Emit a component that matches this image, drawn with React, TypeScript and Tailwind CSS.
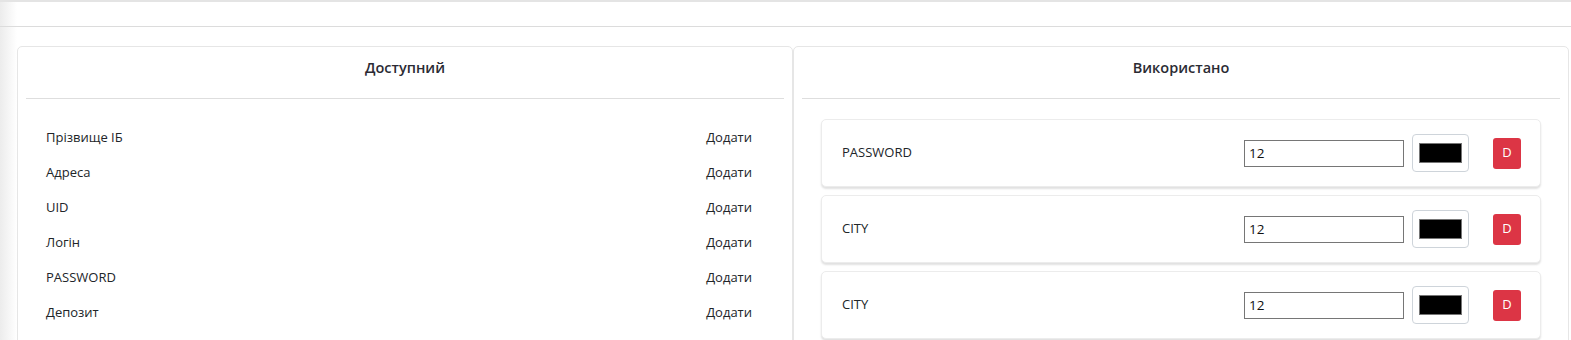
const available = ["Прізвище ІБ", "Адреса", "UID", "Логін", "PASSWORD", "Депозит"];

const used = [
  { id: 1, name: "PASSWORD", size: "12" },
  { id: 2, name: "CITY", size: "12" },
  { id: 3, name: "CITY", size: "12" },
];

const UsedRow = ({ name, size }: { name: string; size: string }) => (
  <div className="flex h-[68px] items-center rounded-[5px] border border-[#ececec] bg-white pl-[20px] pr-[19px] shadow-[0_2px_2px_rgba(0,0,0,0.12)]">
    <span className="flex-1 text-[13px] text-[#212529]">{name}</span>
    <input
      readOnly
      value={size}
      className="h-[27px] w-[160px] border border-[#767676] px-[4px] text-[13.5px] text-[#111] outline-none"
    />
    <div className="ml-[8px] flex h-[38px] w-[57px] items-center justify-center rounded-[4px] border border-[#ced4da] bg-white">
      <div className="h-[20px] w-[43px] border border-[#767676] bg-black" />
    </div>
    <button className="ml-[24px] flex h-[31px] w-[28px] items-center justify-center rounded-[3px] bg-[#dc3545] text-[13px] text-white">
      D
    </button>
  </div>
);

export default function App() {
  return (
    <div
      className="min-h-[340px] bg-white bg-[linear-gradient(to_right,#ececec,#ffffff_17px)] text-[#212529]"
      style={{ fontFamily: '"Open Sans", "Noto Sans", sans-serif' }}
    >
      <div className="h-[27px] border-t-2 border-b border-t-[#e4e4e4] border-b-[#dcdcdc]" />
      <div className="grid grid-cols-2 pl-[17px] pr-[2px] pt-[19px]">
        <section className="rounded-[5px] border border-[#e6e6e6] bg-white">
          <div className="flex h-[51px] justify-center pt-[11px] text-[14.5px] leading-[20px] font-semibold text-[#2b2b33]">
            Доступний
          </div>
          <div className="mx-[8px] border-b border-[#dedede]" />
          <ul className="pl-[28px] pr-[40px] pt-[21px]">
            {available.map((item) => (
              <li key={item} className="flex h-[35px] items-center justify-between text-[13px]">
                <span>{item}</span>
                <span>Додати</span>
              </li>
            ))}
          </ul>
        </section>
        <section className="rounded-[5px] border border-[#e6e6e6] bg-white">
          <div className="flex h-[51px] justify-center pt-[11px] text-[14.5px] leading-[20px] font-semibold text-[#2b2b33]">
            Використано
          </div>
          <div className="mx-[8px] border-b border-[#dedede]" />
          <div className="flex flex-col gap-[8px] px-[27px] pt-[20px] pb-[10px]">
            {used.map((row) => (
              <UsedRow key={row.id} name={row.name} size={row.size} />
            ))}
          </div>
        </section>
      </div>
    </div>
  );
}
